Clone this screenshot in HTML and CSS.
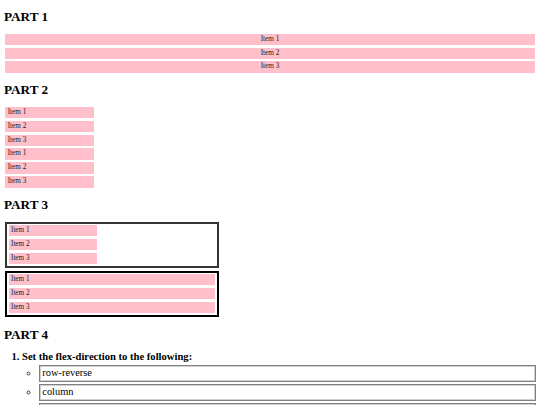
FILE: index.html
```html
<!DOCTYPE html>
<html>
<head>
<meta charset="utf-8">
<link rel="stylesheet" href="styles.css">
</head>
<body>
<h2 class="title t1">PART 1</h2>
<div class="stack one">
  <div class="item">Item 1</div>
  <div class="item">Item 2</div>
  <div class="item">Item 3</div>
</div>

<h2 class="title t2">PART 2</h2>
<div class="stack two">
  <div class="item">Item 1</div>
  <div class="item">Item 2</div>
  <div class="item">Item 3</div>
  <div class="item">Item 1</div>
  <div class="item">Item 2</div>
  <div class="item">Item 3</div>
</div>

<h2 class="title t3">PART 3</h2>
<div class="box box-a">
  <div class="item">Item 1</div>
  <div class="item">Item 2</div>
  <div class="item">Item 3</div>
</div>
<div class="box box-b">
  <div class="item">Item 1</div>
  <div class="item">Item 2</div>
  <div class="item">Item 3</div>
</div>

<h2 class="title t4">PART 4</h2>
<ol class="tasks">
  <li class="task">Set the flex-direction to the following:
    <ul class="options">
      <li class="option"><div class="field">row-reverse</div></li>
      <li class="option"><div class="field">column</div></li>
      <li class="option"><div class="field">column-reverse</div></li>
    </ul>
  </li>
</ol>
</body>
</html>
```

FILE: styles.css
```css
html, body {
  margin: 0;
  padding: 0;
  background: #fff;
}
body {
  padding: 0 4px;
  font-family: "Liberation Serif", "Times New Roman", serif;
  color: #000;
  overflow: hidden;
  height: 405px;
  box-sizing: border-box;
}
.title {
  font-size: 13.2px;
  line-height: 14px;
  font-weight: bold;
  margin: 0;
}
.t1 { margin-top: 9.8px; margin-bottom: 9.3px; }
.t2 { margin-top: 9.6px; margin-bottom: 8px; }
.t3 { margin-top: 9px; margin-bottom: 9.8px; }
.t4 { margin-top: 11.3px; margin-bottom: 0.4px; }

.stack {
  display: flex;
  flex-direction: column;
}
.item {
  background: #ffc0cb;
  font-size: 7.2px;
  color: #1a1a1a;
  margin: 1.2px 1px;
  height: 11.6px;
  line-height: 11.6px;
  padding: 0 2.7px;
}
.one .item {
  height: 11.2px;
  line-height: 11.2px;
  text-align: center;
}
.two .item {
  width: 89px;
  box-sizing: border-box;
}

.box {
  display: flex;
  flex-direction: column;
  width: 214px;
  box-sizing: border-box;
  border: 2px solid #333;
  margin-left: 1px;
}
.box-b {
  border-color: #000;
  margin-top: 2.7px;
}
.box .item {
  margin: 1.5px 1.7px;
  height: 11px;
  line-height: 11px;
  padding: 0 2.3px;
}
.box-a .item {
  width: 88.6px;
  box-sizing: border-box;
}

.tasks {
  margin: 9.1px 0 0 0;
  padding-left: 18px;
}
.task {
  font-size: 10.6px;
  line-height: 12px;
  font-weight: bold;
}
.options {
  list-style: circle;
  margin: 2.2px 0 0 0;
  padding-left: 17.3px;
  font-weight: normal;
}
.option {
  margin-bottom: 2.3px;
}
.option::marker {
  font-size: 9.5px;
  color: #444;
}
.field {
  border: 1px solid #808080;
  box-shadow: inset 0 0 0 1px #d0d0d0;
  line-height: 14.7px;
  padding: 0 2px;
  font-size: 10.4px;
  font-weight: normal;
}
```
